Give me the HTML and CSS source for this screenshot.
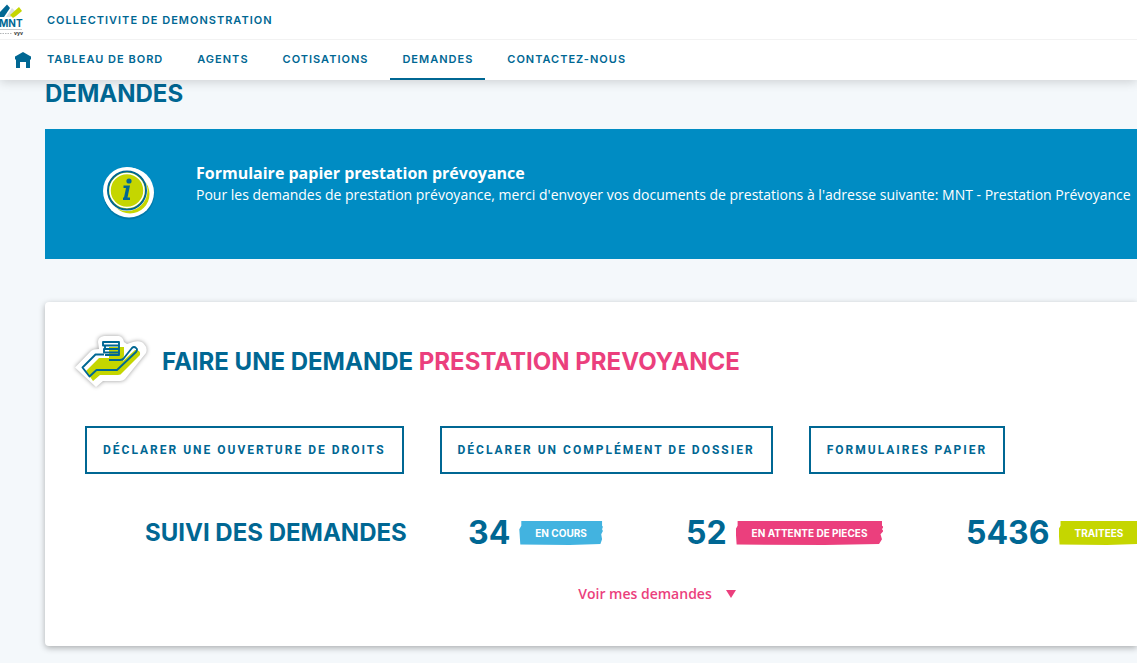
FILE: index.html
```html
<!DOCTYPE html>
<html lang="fr">
<head>
<meta charset="utf-8">
<meta name="viewport" content="width=device-width, initial-scale=1">
<title>Demandes - MNT</title>
<link rel="stylesheet" href="styles.css">
</head>
<body>
<header class="header">
  <div class="topbar">
    <a class="logo" href="#" aria-label="MNT">
      <svg width="24" height="40" viewBox="0 0 24 40" aria-hidden="true">
        <path d="M0 12L7 4.500l3 3.500-6 9H0z" fill="#006793"/>
        <path d="M6 17l6-9 3 3-4 6z" fill="#d9dfe1"/>
        <path d="M10 15l9-8 3 4-6 5-3 2z" fill="#c5d600"/>
        <text class="logo-name" x="-1" y="27">MNT</text>
        <path d="M0 29.500h22" stroke="#c7cbcd"/>
        <path d="M0 33.500h12" stroke="#b3b6b8" stroke-dasharray="1.500 1"/>
        <text class="logo-group" x="14" y="35">vyv</text>
      </svg>
    </a>
    <span class="account">COLLECTIVITE DE DEMONSTRATION</span>
  </div>
  <nav class="nav" aria-label="Navigation principale">
    <a class="home" href="#" aria-label="Accueil">
      <svg width="16" height="16" viewBox="0 0 16 16" aria-hidden="true"><path d="M8 0l7 4 1 .500v3h-1V16h-4v-6H5v6H1V7.500H0v-3L1 4z" fill="#006793"/></svg>
    </a>
    <a class="tab" href="#">TABLEAU DE BORD</a>
    <a class="tab" href="#">AGENTS</a>
    <a class="tab" href="#">COTISATIONS</a>
    <a class="tab tab-active" href="#" aria-current="page">DEMANDES</a>
    <a class="tab" href="#">CONTACTEZ-NOUS</a>
  </nav>
</header>
<main class="content">
  <h1 class="title">DEMANDES</h1>
  <section class="banner">
    <svg class="banner-icon" width="56" height="56" viewBox="0 0 56 56" aria-hidden="true">
      <circle cx="27" cy="28" r="25.500" fill="#00567c" opacity=".35"/>
      <circle cx="25" cy="25" r="24" fill="#fff"/>
      <circle cx="27" cy="26.500" r="25" fill="#fff"/>
      <circle cx="28" cy="28" r="19.500" fill="#c5d600"/>
      <circle cx="25" cy="24.500" r="20.500" fill="#fff"/>
      <circle cx="25" cy="24.500" r="19" fill="#c5d600" stroke="#006793" stroke-width="2"/>
      <circle cx="25" cy="24.500" r="17" fill="#c5d600" stroke="#fff" stroke-width="1.500"/>
      <circle cx="27" cy="15" r="2.600" fill="#006793"/>
      <path d="M21.500 19.500h6.500L25.500 31.500h2.500v2.500h-7v-2.500h1L24 22h-2.500z" fill="#006793"/>
    </svg>
    <div class="banner-text">
      <strong>Formulaire papier prestation prévoyance</strong>
      <p>Pour les demandes de prestation prévoyance, merci d'envoyer vos documents de prestations à l'adresse suivante: MNT - Prestation Prévoyance</p>
    </div>
  </section>
  <section class="card">
    <div class="card-head">
      <svg class="hand" width="76" height="56" viewBox="0 0 76 56" aria-hidden="true">
        <path d="M1 33.500L17 17q2-2 8-2l-1-7q0-5 6-6h15q4 1 5 6l3 2 6-2q8-2 11 2 4 4 2 9L51 45q-2 2-5 2H29l-7 6z" fill="#fff"/>
        <path d="M12 37l13-13h10V13h15v8l-1 6 12-11q6 0 5 5L48 39q-1 2-4 2H26l-7 6z" fill="#c5d600"/>
        <g fill="none" stroke="#006793" stroke-width="1.900" stroke-linejoin="round">
          <path d="M30 20.500h-8.500L8.500 33.500l7 9 7-6.500H43L62 18q2-3 0-4-2-2-4 0L50 24q-1 2-4 2H35"/>
          <path d="M29 8h16v3.500H29zM31 11.500h14v3.500H31zM30 15h15v3.500H30zM31 21h14v-2.500"/>
        </g>
      </svg>
      <h2 class="title">FAIRE UNE DEMANDE <span class="pink">PRESTATION PREVOYANCE</span></h2>
    </div>
    <div class="actions">
      <button class="action" type="button">DÉCLARER UNE OUVERTURE DE DROITS</button>
      <button class="action" type="button">DÉCLARER UN COMPLÉMENT DE DOSSIER</button>
      <button class="action" type="button">FORMULAIRES PAPIER</button>
    </div>
    <div class="stats">
      <h2 class="title">SUIVI DES DEMANDES</h2>
      <div class="stat"><span class="count">34</span><span class="badge badge-blue">EN COURS</span></div>
      <div class="stat"><span class="count">52</span><span class="badge badge-pink">EN ATTENTE DE PIECES</span></div>
      <div class="stat"><span class="count">5436</span><span class="badge badge-green">TRAITEES</span></div>
    </div>
    <div class="more">
      <button class="more-button" type="button">Voir mes demandes
        <svg width="10" height="8" viewBox="0 0 10 8" aria-hidden="true"><path d="M0 0h10L5 8z" fill="#eb3f7d"/></svg>
      </button>
    </div>
  </section>
</main>
</body>
</html>
```
FILE: styles.css
```css
* { box-sizing: border-box; }
body {
  margin: 0;
  background: #f4f8fb;
  color: #006793;
  font-family: "Open Sans", sans-serif;
  font-size: 14px;
}
a { color: inherit; text-decoration: none; }
h1, h2, p { margin: 0; }

.header {
  position: sticky;
  top: 0;
  background: #fff;
  box-shadow: 0 2px 10px rgba(0, 0, 0, 0.16);
  font-family: Inter, sans-serif;
  font-size: 11px;
  font-weight: 600;
  letter-spacing: 1px;
}
.topbar {
  display: flex;
  align-items: center;
  height: 40px;
  border-bottom: 1px solid #f2f2f2;
}
.logo { width: 47px; height: 40px; }
.logo-name { font: 700 10px Inter, sans-serif; letter-spacing: 0; fill: #006793; }
.logo-group { font: 700 5px Inter, sans-serif; letter-spacing: 0; fill: #333; }
.nav { display: flex; gap: 10px; height: 40px; padding-left: 15px; }
.home { display: flex; align-items: center; width: 10px; }
.home svg { flex: none; }
.tab { display: flex; align-items: center; padding: 0 12px; border-bottom: 2px solid transparent; }
.tab-active { border-color: #006793; }

.content { padding: 0 0 16px 45px; overflow: clip; }
.title {
  font: 700 24px/28px Inter, sans-serif;
  white-space: nowrap;
}
.pink { color: #eb3f7d; }

.banner {
  display: flex;
  gap: 38px;
  min-height: 130px;
  margin-top: 21px;
  padding: 34px 0 34px 57px;
  background: #008cc3;
  color: #fff;
}
.banner-icon { flex: none; margin-top: 3px; }
.banner-text { line-height: 21px; }
.banner-text strong { font-size: 16px; }

.card {
  margin-top: 43px;
  padding: 32px 0 40px 40px;
  background: #fff;
  border-radius: 4px 0 0 4px;
  box-shadow: 0 2px 6px rgba(0, 0, 0, 0.3);
}
.card-head { display: flex; align-items: center; gap: 12px; margin-left: -11px; }
.hand { flex: none; filter: drop-shadow(0 0 2px rgba(0, 0, 0, 0.4)); }
.actions { display: flex; gap: 36px; margin-top: 36px; }
.action {
  height: 48px;
  padding: 0 16px;
  border: 2px solid #006793;
  background: #fff;
  color: #006793;
  font: 700 12px Roboto, sans-serif;
  letter-spacing: 2px;
  white-space: nowrap;
}
.stats {
  display: grid;
  grid-template-columns: 323px 218px 280px auto;
  align-items: center;
  margin: 39px 0 0 60px;
}
.stat { display: flex; align-items: center; gap: 9px; min-width: 0; }
.count { font: 700 32px/40px Inter, sans-serif; }
.badge {
  padding: 0 16px;
  color: #fff;
  font: 700 10px/24px Inter, sans-serif;
  white-space: nowrap;
  clip-path: polygon(2px 0, 99% 0, 99% 20%, 100% 24%, 99% 34%, 100% 42%, 98% 55%, 99% 76%, 97% 96%, 60% 100%, 1px 98%, 0 34%, 2px 20%);
}
.badge-blue { background: #42b3e0; }
.badge-pink { background: #eb3f7d; }
.badge-green { background: #c5d600; }
.more { display: flex; justify-content: center; margin-top: 29px; padding-left: 92px; }
.more-button {
  display: flex;
  align-items: center;
  gap: 14px;
  padding: 0;
  border: 0;
  background: none;
  color: #eb3f7d;
  font: 600 14px/24px "Open Sans", sans-serif;
}
```
